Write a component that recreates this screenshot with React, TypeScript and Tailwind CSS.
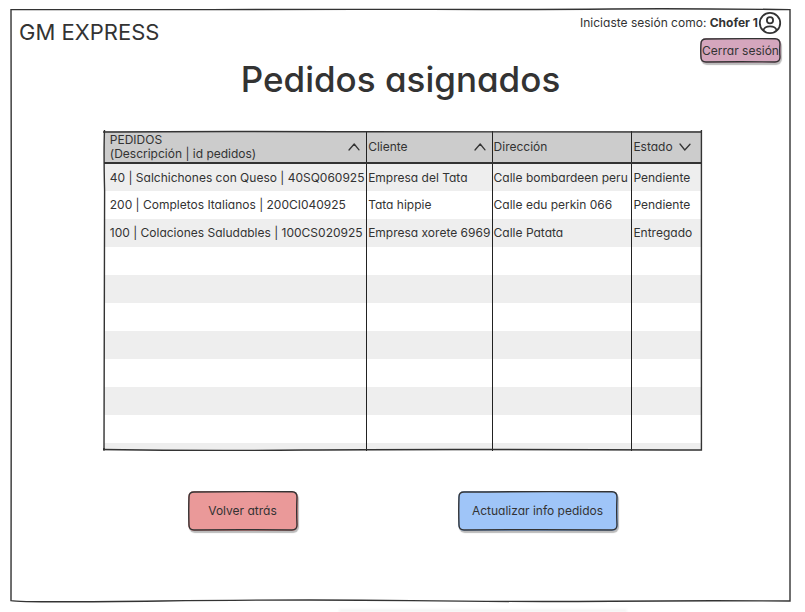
type Order = {
  description: string;
  client: string;
  address: string;
  status: string;
};

const orders: Order[] = [
  {
    description: "40 | Salchichones con Queso | 40SQ060925",
    client: "Empresa del Tata",
    address: "Calle bombardeen peru",
    status: "Pendiente",
  },
  {
    description: "200 | Completos Italianos | 200CI040925",
    client: "Tata hippie",
    address: "Calle edu perkin 066",
    status: "Pendiente",
  },
  {
    description: "100 | Colaciones Saludables | 100CS020925",
    client: "Empresa xorete 6969",
    address: "Calle Patata",
    status: "Entregado",
  },
];

const emptyRows = [0, 1, 2, 3, 4, 5, 6, 7];

const framePath =
  "M0 0.6 Q90 1 200 0.6 T420 0.4 T600 0 T779 0.6 Q778.4 150 779 300 T779 592 Q690 591.4 600 592.2 T400 591.6 T150 592 T0 591.6 Q0.8 400 0.4 260 T0 0";
const tablePath =
  "M-1 1 Q100 0 260 0.8 T598 1 V-1 M598 0 Q597.4 160 598 319 Q300 318 200 319 T-1 318.5 M0 320 Q0.6 150 0.6 60 Q-0.4 20 0.5 -1";

// Pencil-like outline stretched over its positioned parent.
function Sketch({ width, height, path }: { width: number; height: number; path: string }) {
  return (
    <svg
      viewBox={`0 0 ${width} ${height}`}
      preserveAspectRatio="none"
      className="pointer-events-none absolute inset-0 size-full overflow-visible"
      fill="none"
      stroke="#333"
      strokeWidth="1.4"
      aria-hidden="true"
    >
      <path d={path} vectorEffect="non-scaling-stroke" />
    </svg>
  );
}

function Caret({ down = false }: { down?: boolean }) {
  return (
    <svg viewBox="0 0 12 8" className="h-2 w-3 shrink-0" fill="none" stroke="#333" strokeWidth="1.3" strokeLinecap="round" strokeLinejoin="round" aria-hidden="true">
      <path d={down ? "M1 1 L5.8 7 L11 1.2" : "M1 7 L6.2 1 L11 6.8"} />
    </svg>
  );
}

function UserIcon() {
  return (
    <svg viewBox="0 0 24 24" className="size-6 shrink-0" fill="none" stroke="#333" strokeWidth="1.8" aria-hidden="true">
      <circle cx="12" cy="12" r="10.2" />
      <circle cx="12" cy="9.2" r="3.1" />
      <path d="M5.4 19.4 C6.1 16.3 8.8 15.4 12 15.4 C15.2 15.4 17.9 16.3 18.6 19.4" />
    </svg>
  );
}

const cell = "border-l border-[#222] p-0 pl-px text-left font-normal whitespace-nowrap first:border-l-0 first:pl-1.5";
const button = "relative cursor-pointer rounded-md text-[#333] shadow-[1px_2px_1px_#bbb]";

function ButtonOutline({ width, height }: { width: number; height: number }) {
  const r = width - 1;
  const b = height - 1;
  return (
    <Sketch
      width={width}
      height={height}
      path={`M6 1 Q${width / 2} 0.3 ${r - 5} 0.8 Q${r} 1 ${r} 6 Q${r - 0.6} ${height / 2} ${r} ${b - 5} Q${r} ${b} ${r - 5} ${b} Q${width / 2} ${b - 0.5} 6 ${b} Q1 ${b} 1 ${b - 5} Q0.5 ${height / 2} 1 6 Q1 1 6 1 Z`}
    />
  );
}

export default function App() {
  return (
    <div className="relative flex min-h-screen flex-col overflow-hidden bg-white pt-[9px] pr-[15px] pb-[11px] pl-[11px] font-['Inter','Liberation_Sans',sans-serif] text-xs text-[#333] [font-feature-settings:'cv11','calt'_0]">
      <main className="relative flex flex-1 flex-col px-2">
        <Sketch width={779} height={592} path={framePath} />
        <header className="flex items-start justify-between pr-px">
          <p className="mt-[9px] text-[22px] leading-7">GM EXPRESS</p>
          <div className="flex flex-col items-end gap-[3px] pt-0.5">
            <p className="-mr-px flex h-6 items-center">
              <span className="whitespace-pre">
                Iniciaste sesión como: <b className="font-bold">Chofer 1</b>
              </span>
              <UserIcon />
            </p>
            <button type="button" className={`${button} h-[25px] w-[81px] bg-[#d5a6bd] whitespace-nowrap`}>
              Cerrar sesión
              <ButtonOutline width={81} height={25} />
            </button>
          </div>
        </header>

        <h1 className="text-center text-[35px] leading-8 font-medium">Pedidos asignados</h1>

        <div className="relative mt-9 ml-1 h-80 w-[78.3%] self-center">
          <div className="h-full overflow-hidden">
            <table className="w-full table-fixed border-collapse">
              <colgroup>
                <col className="w-[44%]" />
                <col className="w-[21%]" />
                <col className="w-[23.4%]" />
                <col />
              </colgroup>
              <thead>
                <tr className="h-8 border-b-2 border-[#333] bg-[#ccc]">
                  <th scope="col" className={cell}>
                    <button type="button" className="flex w-full items-center justify-between pr-1.5 text-left leading-3.5">
                      <span>
                        PEDIDOS
                        <br />
                        (Descripción | id pedidos)
                      </span>
                      <Caret />
                    </button>
                  </th>
                  <th scope="col" className={cell}>
                    <button type="button" className="flex w-full items-center justify-between pr-1.5">
                      Cliente <Caret />
                    </button>
                  </th>
                  <th scope="col" className={cell}>Dirección</th>
                  <th scope="col" className={cell}>
                    <button type="button" className="flex items-center gap-1.5">
                      Estado <Caret down />
                    </button>
                  </th>
                </tr>
              </thead>
              <tbody>
                {orders.map((order) => (
                  <tr key={order.description} className="h-7 pb-1 leading-3.5 odd:bg-[#eee]">
                    <td className={cell}>{order.description}</td>
                    <td className={cell}>{order.client}</td>
                    <td className={cell}>{order.address}</td>
                    <td className={cell}>{order.status}</td>
                  </tr>
                ))}
                {emptyRows.map((row) => (
                  <tr key={row} className="h-7 odd:bg-[#eee]">
                    <td className={cell} />
                    <td className={cell} />
                    <td className={cell} />
                    <td className={cell} />
                  </tr>
                ))}
              </tbody>
            </table>
          </div>
          <Sketch width={598} height={320} path={tablePath} />
        </div>

        <div className="mt-10 ml-1 flex flex-wrap justify-center gap-x-40 gap-y-4 pb-8">
          <button type="button" className={`${button} h-10 w-[110px] bg-[#ea9999]`}>
            Volver atrás
            <ButtonOutline width={110} height={40} />
          </button>
          <button type="button" className={`${button} h-10 w-40 bg-[#9fc5f8]`}>
            Actualizar info pedidos
            <ButtonOutline width={160} height={40} />
          </button>
        </div>
      </main>
      <div className="absolute bottom-0 left-1/2 h-1 w-72 -translate-x-16 bg-linear-to-b from-white to-[#eee] blur-[1px]" />
    </div>
  );
}
